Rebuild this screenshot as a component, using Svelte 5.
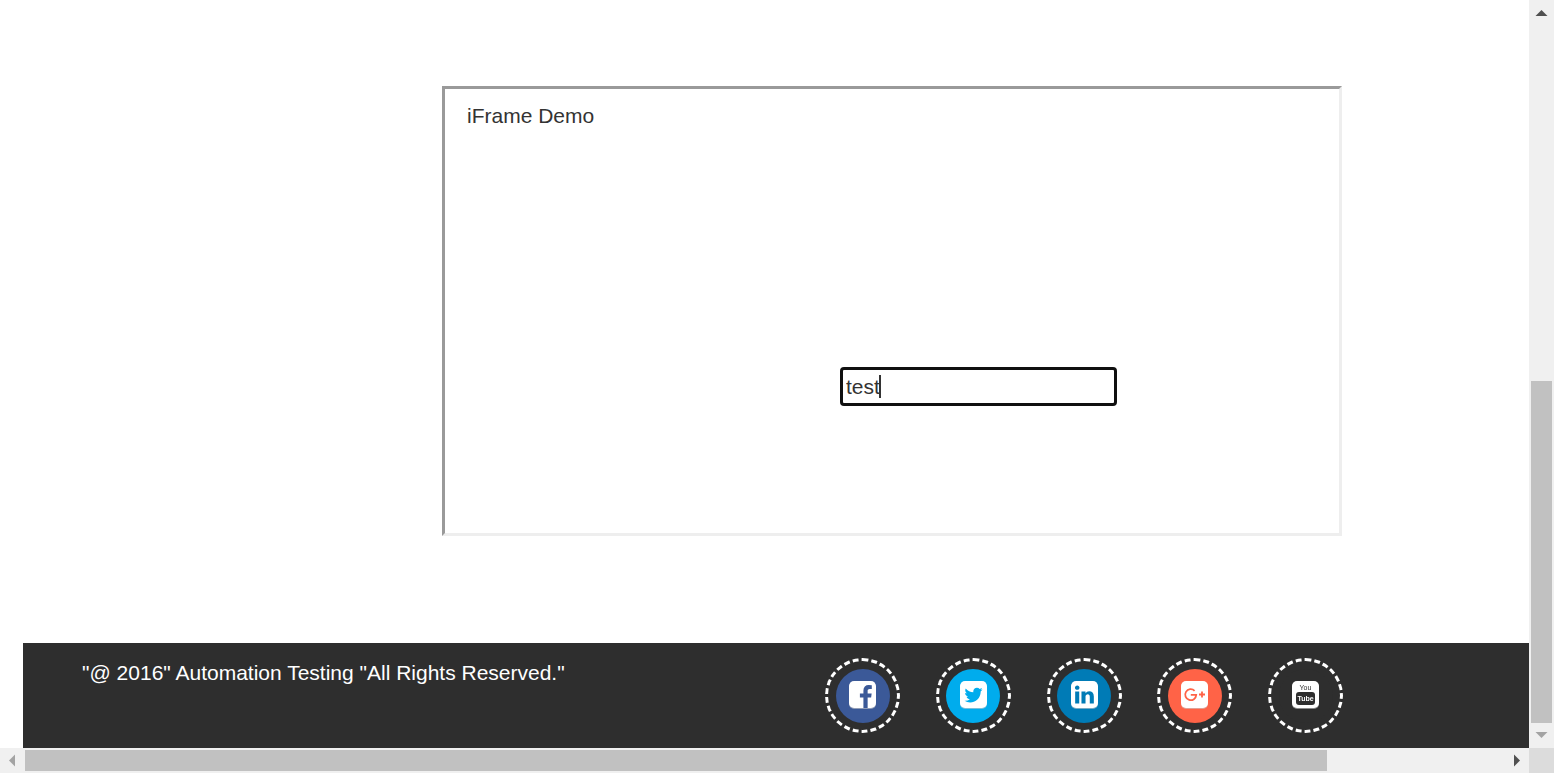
<script>
  let value = $state('test');

  const links = [
    {
      name: 'Facebook',
      color: '#3b5998',
      mark: 'M1060 1664v-595h199l30-232h-229v-148q0-56 23.5-84t91.5-28l122-1v-207q-63-9-178-9-136 0-217.5 80t-81.5 226v171h-200v232h200v595z'
    },
    {
      name: 'Twitter',
      color: '#00aced',
      mark: 'M1280 610q-56 25-121 34 68-40 93-117-65 38-134 51-61-66-153-66-87 0-148.5 61.5t-61.5 148.5q0 29 5 48-129-7-242-65t-192-155q-29 50-29 106 0 114 91 175-47-1-100-26v2q0 75 50 133.5t123 72.5q-29 8-51 8-13 0-39-4 21 63 74.5 104t121.5 42q-116 90-261 90-26 0-50-3 148 94 322 94 112 0 210-35.5t168-95 120.5-137 75-162 24.5-168.5q0-18-1-27 63-45 105-109z'
    },
    {
      name: 'LinkedIn',
      color: '#007bb6',
      mark: 'M237 1414h231v-694h-231v694zm246-908q-1-52-36-86t-93-34-94.5 34-36.5 86q0 51 35.5 85.5t92.5 34.5h1q59 0 95-34.5t36-85.5zm585 908h231v-398q0-154-73-233t-193-79q-136 0-209 117h2v-101h-231q3 66 0 694h231v-388q0-38 7-56 15-35 45-59.5t74-24.5q116 0 116 157v371z'
    },
    { name: 'Google Plus', color: '#ff6347', mark: null },
    { name: 'YouTube', color: '#2e2e2e', mark: null }
  ];
</script>

<div class="window">
  <div class="page">
    <main>
      <section class="frame">
        <h5>iFrame Demo</h5>
        <div class="field">
          <input type="text" aria-label="iFrame Demo" bind:value />
          <span class="caret"></span>
        </div>
      </section>
    </main>
    <footer>
      <p>"@ 2016" Automation Testing "All Rights Reserved."</p>
      <nav>
        {#each links as link}
          <a href="#top" aria-label={link.name}>
            <span class="disc" style:background={link.color}>
              <svg class="icon" viewBox={link.mark ? '0 128 1536 1536' : '0 0 27 27'}>
                {#if link.mark}
                  <rect y="128" width="1536" height="1536" rx="288" fill="#fff" />
                  <path d={link.mark} fill={link.color} />
                {:else if link.name === 'Google Plus'}
                  <rect width="27" height="27" rx="5" fill="#fff" />
                  <path
                    d="M13.600 9.800A5.500 5.500 0 1 0 15.200 13.900H9.800M18 13.500H24M21 10.500V16.500"
                    fill="none"
                    stroke={link.color}
                    stroke-width="1.800"
                  />
                {:else}
                  <rect width="27" height="27" rx="5" fill="#fff" />
                  <text x="13.500" y="9" class="you">You</text>
                  <rect x="4" y="11" width="19" height="13" rx="3" fill="#2e2e2e" />
                  <text x="13.500" y="20" class="tube">Tube</text>
                {/if}
              </svg>
            </span>
          </a>
        {/each}
      </nav>
    </footer>
  </div>

  <div class="bar vertical">
    <svg class="arrow" viewBox="0 0 25 25"><path d="M6.500 16L12.500 10L18.500 16z" fill="#505050" /></svg>
    <div class="track"><div class="thumb"></div></div>
    <svg class="arrow" viewBox="0 0 25 25"><path d="M6.500 9L12.500 15L18.500 9z" fill="#a3a3a3" /></svg>
  </div>
  <div class="bar horizontal">
    <svg class="arrow" viewBox="0 0 25 25"><path d="M15 6.500L9 12.500L15 18.500z" fill="#a3a3a3" /></svg>
    <div class="track"><div class="thumb"></div></div>
    <svg class="arrow" viewBox="0 0 25 25"><path d="M10 6.500L16 12.500L10 18.500z" fill="#505050" /></svg>
  </div>
  <div class="corner"></div>
</div>

<style>
  :global(body) {
    margin: 0;
    background: #fff;
  }

  .window {
    display: grid;
    grid-template-columns: minmax(0, 1fr) 25px;
    grid-template-rows: 1fr 25px;
    min-height: 100vh;
    font-family: 'Liberation Sans', Arial, sans-serif;
    font-size: 21px;
    line-height: 30px;
    color: #333;
  }

  .page {
    display: flex;
    flex-direction: column;
    padding-left: 23px;
  }

  main {
    flex: 1;
    display: flex;
    justify-content: flex-end;
    align-items: flex-start;
    padding: 86px 187px 107px 0;
  }

  .frame {
    box-sizing: border-box;
    width: 900px;
    min-height: 450px;
    padding: 12px 22px;
    border: 3px solid;
    border-color: #9a9a9a #eee #eee #9a9a9a;
  }

  h5 {
    margin: 0;
    font: inherit;
  }

  .field {
    position: relative;
    width: 277px;
    margin: 236px 200px 0 auto;
  }

  input {
    display: block;
    box-sizing: border-box;
    width: 100%;
    height: 39px;
    padding: 0 3px;
    border: 3px solid #101010;
    border-radius: 4px;
    outline: none;
    background: #fff;
    font: inherit;
    color: inherit;
    caret-color: transparent;
  }

  .caret {
    position: absolute;
    left: 39px;
    top: 8px;
    width: 2px;
    height: 23px;
    background: #333;
  }

  footer {
    display: flex;
    justify-content: space-between;
    align-items: flex-start;
    padding: 15px 186px 15px 59px;
    background: #2e2e2e;
    color: #fff;
  }

  p {
    margin: 0;
  }

  nav {
    display: flex;
    justify-content: space-between;
    width: 518px;
  }

  a {
    display: flex;
    align-items: center;
    justify-content: center;
    box-sizing: border-box;
    width: 75px;
    height: 75px;
    border: 3px dashed #fff;
    border-radius: 50%;
  }

  .disc {
    display: flex;
    align-items: center;
    justify-content: center;
    box-sizing: border-box;
    width: 54px;
    height: 54px;
    padding-bottom: 2px;
    border-radius: 50%;
  }

  .icon {
    width: 27px;
    height: 27px;
    filter: drop-shadow(0 1px 0 rgba(204, 204, 204, 0.6));
  }

  .icon text {
    font-family: 'Liberation Sans', Arial, sans-serif;
    font-size: 7px;
    text-anchor: middle;
  }

  .you {
    fill: #2e2e2e;
  }

  .tube {
    font-weight: 700;
    fill: #fff;
  }

  .bar {
    display: flex;
    background: #f0f0f0;
  }

  .vertical {
    flex-direction: column;
  }

  .arrow {
    flex: none;
    width: 25px;
    height: 25px;
  }

  .track {
    flex: 1;
    display: flex;
  }

  .thumb {
    background: #c1c1c1;
  }

  .vertical .track {
    align-items: flex-end;
    padding: 0 2px;
  }

  .vertical .thumb {
    width: 100%;
    height: 49%;
  }

  .horizontal .track {
    padding: 2px 0;
  }

  .horizontal .thumb {
    width: 88%;
  }

  .corner {
    background: #dcdcdc;
  }
</style>
